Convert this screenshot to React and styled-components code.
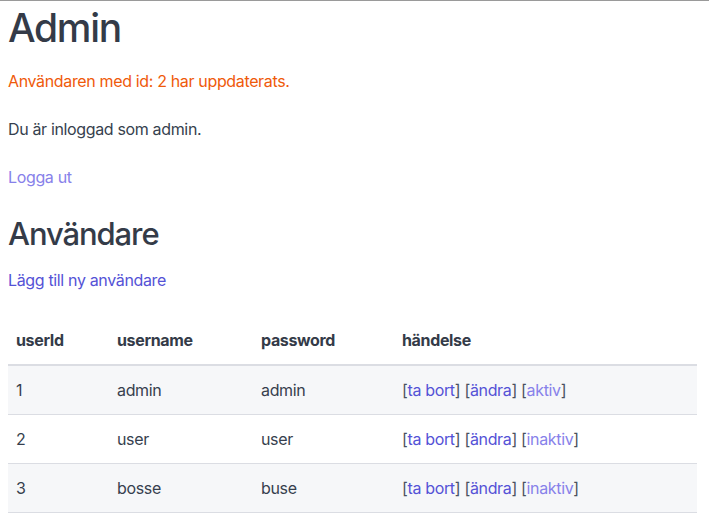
import React from "react";
import styled, { createGlobalStyle } from "styled-components";

const GlobalStyle = createGlobalStyle`
  html, body {
    margin: 0;
    background: #ffffff;
  }
  body {
    border-top: 1px solid #9a9a9a;
    padding: 0 12px 0 8px;
    font-family: Inter, "Noto Sans", "Liberation Sans", sans-serif;
    font-size: 16px;
    line-height: 24px;
    letter-spacing: -0.35px;
    color: #363f4e;
  }
`;

const Page = styled.main`
  display: flex;
  flex-direction: column;
`;

const Title = styled.h1`
  margin: 3px 0 17px;
  font-size: 39px;
  line-height: 48px;
  font-weight: 500;
  letter-spacing: -1.3px;
  color: #343b48;
`;

const SubTitle = styled.h2`
  margin: 25px 0 14px;
  font-size: 31px;
  line-height: 40px;
  font-weight: 500;
  letter-spacing: -1.1px;
  color: #343b48;
`;

const Text = styled.p`
  margin: 0 0 ${(p) => (p.$last ? "0" : "24px")};
  color: ${(p) => p.$color || "#363f4e"};
`;

const Link = styled.a`
  color: ${(p) => (p.$visited ? "#8781ea" : "#5452d6")};
  text-decoration: none;
  cursor: pointer;
`;

const Table = styled.table`
  width: 100%;
  border-collapse: collapse;
  text-align: left;
`;

const HeadCell = styled.th`
  padding: 12px 8px;
  font-weight: 700;
  color: #343b48;
  border-bottom: 2px solid #dbdde3;
`;

const Row = styled.tr`
  background: ${(p) => (p.$striped ? "#f6f7f9" : "#ffffff")};
`;

const Cell = styled.td`
  padding: 12px 8px;
  border-bottom: 1px solid #dbdde3;
  color: #363f4e;
`;

const Bracket = styled.span`
  color: #4a5160;
`;

const users = [
  { id: 1, name: "admin", password: "admin", status: "aktiv" },
  { id: 2, name: "user", password: "user", status: "inaktiv" },
  { id: 3, name: "bosse", password: "buse", status: "inaktiv" },
];

const Action = ({ children, visited }) => (
  <Bracket>
    [<Link $visited={visited}>{children}</Link>]
  </Bracket>
);

export default function App() {
  return (
    <>
      <GlobalStyle />
      <Page>
        <Title>Admin</Title>
        <Text $color="#ef5a0a">Användaren med id: 2 har uppdaterats.</Text>
        <Text>Du är inloggad som admin.</Text>
        <Text $last>
          <Link $visited>Logga ut</Link>
        </Text>
        <SubTitle>Användare</SubTitle>
        <Text>
          <Link>Lägg till ny användare</Link>
        </Text>
        <Table>
          <colgroup>
            <col style={{ width: 101 }} />
            <col style={{ width: 144 }} />
            <col style={{ width: 141 }} />
            <col />
          </colgroup>
          <thead>
            <tr>
              <HeadCell>userId</HeadCell>
              <HeadCell>username</HeadCell>
              <HeadCell>password</HeadCell>
              <HeadCell>händelse</HeadCell>
            </tr>
          </thead>
          <tbody>
            {users.map((u, i) => (
              <Row key={u.id} $striped={i % 2 === 0}>
                <Cell>{u.id}</Cell>
                <Cell>{u.name}</Cell>
                <Cell>{u.password}</Cell>
                <Cell>
                  <Action>ta bort</Action> <Action>ändra</Action>{" "}
                  <Action visited>{u.status}</Action>
                </Cell>
              </Row>
            ))}
          </tbody>
        </Table>
      </Page>
    </>
  );
}
